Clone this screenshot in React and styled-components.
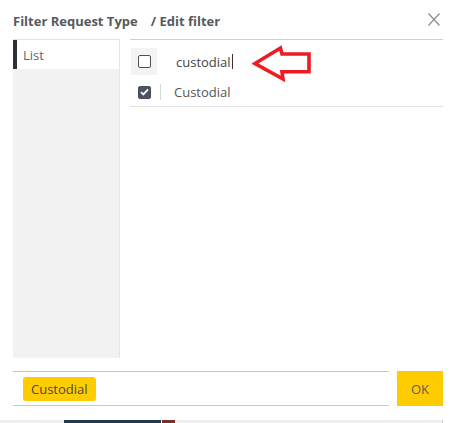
import React from "react";
import styled, { createGlobalStyle } from "styled-components";

const GlobalStyle = createGlobalStyle`
  html, body {
    margin: 0;
    padding: 0;
    background: #ffffff;
  }
  body {
    font-family: "Open Sans", "Noto Sans", sans-serif;
    color: #444;
  }
`;

const Page = styled.div`
  width: 457px;
  height: 423px;
  overflow: hidden;
`;

const Modal = styled.div`
  position: relative;
  width: 443px;
  height: 420px;
  box-sizing: border-box;
  padding-left: 13px;
  background: #fff;
  display: flex;
  flex-direction: column;
`;

const Header = styled.div`
  height: 39px;
  display: flex;
  align-items: center;
  justify-content: space-between;
  padding-right: 3px;
`;

const Title = styled.h2`
  margin: 0;
  font-size: 13px;
  font-weight: 700;
  color: #555a60;
  display: flex;
  gap: 13px;
  line-height: 18px;
  padding-top: 2px;
`;

const CloseButton = styled.button`
  border: 0;
  background: none;
  padding: 0;
  width: 12px;
  height: 13px;
  cursor: pointer;
  display: flex;
`;

const Body = styled.div`
  display: grid;
  grid-template-columns: 107px 1fr;
  column-gap: 10px;
  height: 319px;
`;

const SideNav = styled.div`
  background: #f2f2f2;
  border-top: 1px solid #e2e2e2;
  border-right: 1px solid #e6e6e6;
`;

const NavItem = styled.div`
  height: 29px;
  display: flex;
  align-items: center;
  padding-left: 6px;
  background: ${(p) => (p.$active ? "#fff" : "transparent")};
  border-left: 4px solid ${(p) => (p.$active ? "#2b303b" : "transparent")};
  font-size: 13px;
  color: #666;
`;

const Content = styled.div`
  border-top: 1px solid #cfcfcf;
  position: relative;
`;

const SearchRow = styled.div`
  display: flex;
  align-items: center;
  padding-top: 8px;
  height: 27px;
  gap: 19px;
`;

const CheckCell = styled.div`
  width: 26px;
  height: 27px;
  margin-left: 1px;
  background: ${(p) => (p.$shaded ? "#f4f4f4" : "transparent")};
  display: flex;
  align-items: center;
  justify-content: center;
`;

const Box = styled.span`
  width: 13px;
  height: 13px;
  box-sizing: border-box;
  border-radius: 2px;
  border: 1.5px solid #4a4f5c;
  background: ${(p) => (p.$checked ? "#4d5260" : "#fff")};
  display: flex;
  align-items: center;
  justify-content: center;
`;

const SearchText = styled.span`
  font-size: 13px;
  color: #444;
  display: flex;
  align-items: center;
`;

const Caret = styled.span`
  display: inline-block;
  width: 1px;
  height: 15px;
  background: #333;
  margin-left: 1px;
`;

const OptionRow = styled.div`
  display: flex;
  align-items: center;
  margin-top: 3px;
  height: 28px;
  border-bottom: 1px solid #e2e2e2;
`;

const Divider = styled.span`
  width: 1px;
  height: 16px;
  background: #d8d8d8;
  margin-left: 3px;
  margin-right: 13px;
`;

const OptionLabel = styled.span`
  font-size: 13px;
  color: #555;
`;

const Annotation = styled.svg`
  position: absolute;
  left: 122px;
  top: 5px;
`;

const Footer = styled.div`
  margin-top: 13px;
  display: flex;
  gap: 8px;
  height: 35px;
`;

const Selection = styled.div`
  flex: 0 0 376px;
  box-sizing: border-box;
  border-top: 1px solid #c8c8c8;
  border-bottom: 1px solid #c8c8c8;
  display: flex;
  align-items: center;
  padding-left: 10px;
`;

const Chip = styled.span`
  background: #ffcc00;
  border-radius: 3px;
  height: 24px;
  padding: 0 8px;
  display: flex;
  align-items: center;
  font-size: 13px;
  color: #4a4a4a;
`;

const OkButton = styled.button`
  flex: 0 0 46px;
  border: 0;
  background: #ffcc00;
  font-family: inherit;
  font-size: 13px;
  color: #5f5f5f;
  cursor: pointer;
  padding: 0;
`;

const Behind = styled.div`
  height: 3px;
  width: 443px;
  background: #efefef;
  border-right: 1px solid #cfcfcf;
  box-sizing: border-box;
  display: flex;
  padding-left: 64px;
  gap: 1px;
`;

const Swatch = styled.span`
  width: ${(p) => p.$w}px;
  background: ${(p) => p.$c};
`;

export default function App() {
  return (
    <Page>
      <GlobalStyle />
      <Modal>
        <Header>
          <Title>
            <span>Filter Request Type</span>
            <span>/ Edit filter</span>
          </Title>
          <CloseButton aria-label="Close">
            <svg width="12" height="13" viewBox="0 0 12 13">
              <path d="M0.5 0.5 L11.5 12.5 M11.5 0.5 L0.5 12.5" stroke="#8a8d93" strokeWidth="1.2" fill="none" />
            </svg>
          </CloseButton>
        </Header>
        <Body>
          <SideNav>
            <NavItem $active>List</NavItem>
          </SideNav>
          <Content>
            <SearchRow>
              <CheckCell $shaded>
                <Box />
              </CheckCell>
              <SearchText>
                custodial
                <Caret />
              </SearchText>
            </SearchRow>
            <OptionRow>
              <CheckCell>
                <Box $checked>
                  <svg width="9" height="8" viewBox="0 0 9 8">
                    <path d="M1 4.2 L3.4 6.4 L8 1.4" stroke="#fff" strokeWidth="1.8" fill="none" />
                  </svg>
                </Box>
              </CheckCell>
              <Divider />
              <OptionLabel>Custodial</OptionLabel>
            </OptionRow>
            <Annotation width="62" height="38" viewBox="0 0 62 38">
              <path
                d="M3 18.5 L28.5 3 L30 9 L57 9 L57 26.7 L30 26.7 L31 34 Z"
                fill="none"
                stroke="#ed1c24"
                strokeWidth="3.6"
                strokeLinejoin="miter"
              />
            </Annotation>
          </Content>
        </Body>
        <Footer>
          <Selection>
            <Chip>Custodial</Chip>
          </Selection>
          <OkButton>OK</OkButton>
        </Footer>
      </Modal>
      <Behind>
        <Swatch $w={97} $c="#1f3a4f" />
        <Swatch $w={13} $c="#7a2f27" />
      </Behind>
    </Page>
  );
}
